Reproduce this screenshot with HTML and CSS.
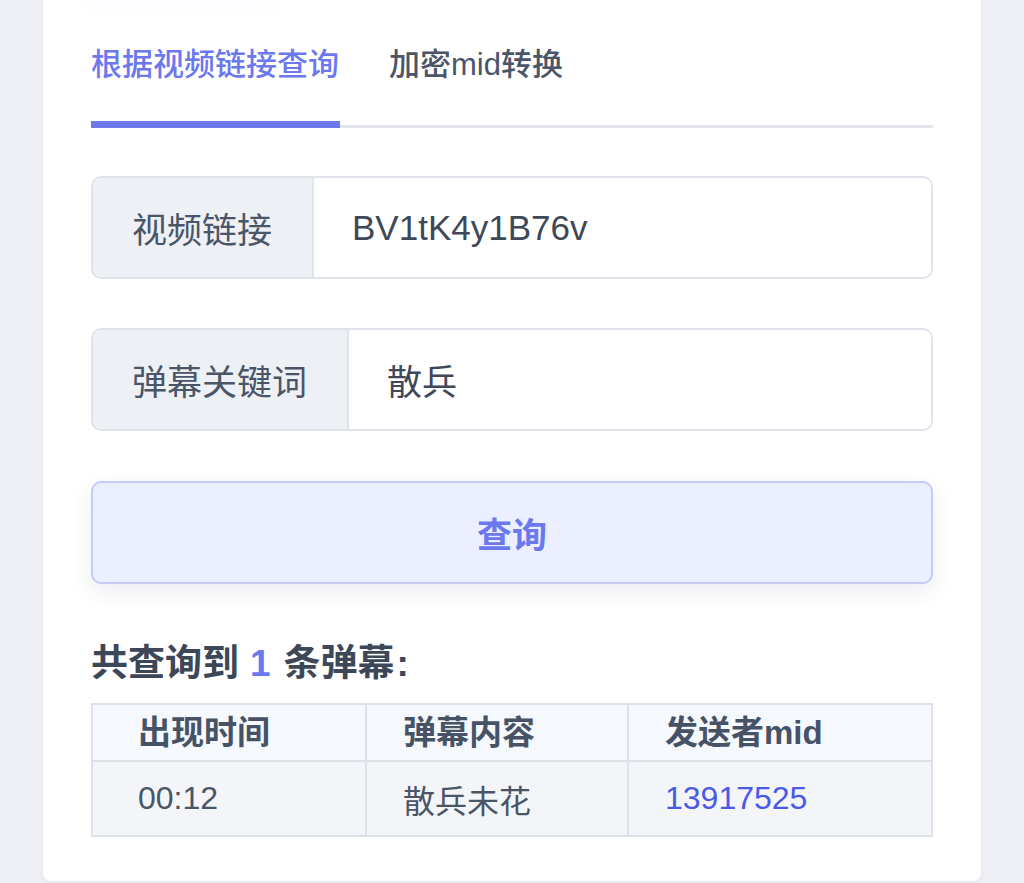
FILE: index.html
```html
<!DOCTYPE html>
<html lang="zh-CN">
<head>
<meta charset="utf-8">
<title>弹幕查询</title>
<link rel="stylesheet" href="styles.css">
</head>
<body>
<div class="page">
  <div class="card">
    <div class="top-shadow"></div>
    <div class="tabs">
      <div class="tab active">根据视频链接查询</div>
      <div class="tab">加密mid转换</div>
    </div>
    <div class="form">
      <div class="field">
        <div class="field-label">视频链接</div>
        <div class="field-input">BV1tK4y1B76v</div>
      </div>
      <div class="field">
        <div class="field-label">弹幕关键词</div>
        <div class="field-input">散兵</div>
      </div>
      <button class="btn">查询</button>
    </div>
    <div class="result-title">共查询到<span class="count">1</span>条弹幕<span class="colon">:</span></div>
    <table class="result">
      <thead>
        <tr>
          <th class="c1">出现时间</th>
          <th class="c2">弹幕内容</th>
          <th class="c3">发送者mid</th>
        </tr>
      </thead>
      <tbody>
        <tr>
          <td class="c1">00:12</td>
          <td class="c2">散兵未花</td>
          <td class="c3"><span class="mid">13917525</span></td>
        </tr>
      </tbody>
    </table>
  </div>
</div>
</body>
</html>
```
FILE: styles.css
```css
* { box-sizing: border-box; }
html, body {
  margin: 0;
  padding: 0;
  height: 100%;
}
body {
  background: #eef0f5;
  font-family: "Liberation Sans", "Noto Sans CJK SC", sans-serif;
  color: #465366;
  overflow: hidden;
}
.page {
  padding: 0 43px;
}
.card {
  width: 938px;
  height: 881px;
  background: #ffffff;
  border-radius: 0 0 8px 8px;
  padding: 0 48px;
  box-shadow: 0 2px 6px rgba(60, 70, 110, 0.05);
}
.top-shadow {
  height: 4px;
  width: 190px;
  margin-left: -4px;
  background: #fdfdff;
  box-shadow: 0 4px 12px rgba(130, 140, 220, 0.07);
  border-radius: 0 0 6px 6px;
  margin-bottom: 41px;
}
.tabs {
  display: flex;
  gap: 50px;
  border-bottom: 3px solid #e3e6ee;
}
.tab {
  position: relative;
  font-size: 31px;
  line-height: 40px;
  font-weight: 500;
  padding-bottom: 40px;
  color: #4b5568;
  white-space: nowrap;
}
.tab.active {
  color: #6b78ee;
}
.tab.active::after {
  content: "";
  position: absolute;
  left: 0;
  right: -1px;
  bottom: -3px;
  height: 7px;
  background: #6b78ee;
}
.form {
  display: flex;
  flex-direction: column;
  gap: 49px;
  padding-top: 48px;
}
.field {
  display: flex;
  height: 103px;
  border: 2px solid #dfe3ea;
  border-radius: 10px;
  overflow: hidden;
}
.field-label {
  display: flex;
  align-items: center;
  padding: 0 40px 0 39px;
  background: #edf0f5;
  border-right: 2px solid #dfe3ea;
  font-size: 35px;
  color: #4a5567;
  white-space: nowrap;
}
.field-input {
  flex: 1;
  display: flex;
  align-items: center;
  padding-left: 38px;
  font-size: 35px;
  color: #3e4858;
  background: #fff;
}
.btn {
  display: block;
  width: 100%;
  height: 103px;
  margin-top: 1px;
  border: 2px solid #c6cbfa;
  border-radius: 10px;
  background: #ecefff;
  color: #6b78ee;
  font-family: "Liberation Sans", "Noto Sans CJK SC", sans-serif;
  font-size: 35px;
  font-weight: 700;
  box-shadow: 0 8px 22px rgba(40, 50, 90, 0.09);
  padding: 0;
}
.result-title {
  margin-top: 55px;
  font-size: 37px;
  line-height: 50px;
  font-weight: 700;
  color: #3d4758;
}
.result-title .count {
  color: #6b78ee;
  margin: 0 13px 0 11px;
}
.result-title .colon {
  margin-left: 2px;
}
.result {
  margin-top: 14px;
  width: 100%;
  border-collapse: collapse;
  table-layout: fixed;
}
.result th, .result td {
  border: 2px solid #dde2ea;
  text-align: left;
  white-space: nowrap;
}
.result th {
  height: 56px;
  padding-bottom: 6px;
  background: #f5f8fc;
  font-size: 33px;
  font-weight: 700;
  color: #465366;
}
.result td {
  height: 75px;
  background: #f3f5f9;
  font-size: 32px;
  color: #4a5567;
}
.result .c1 { width: 274px; padding-left: 45px; }
.result .c2 { width: 262px; padding-left: 36px; }
.result .c3 { padding-left: 36px; }
.mid {
  color: #4a5ae8;
}
```
